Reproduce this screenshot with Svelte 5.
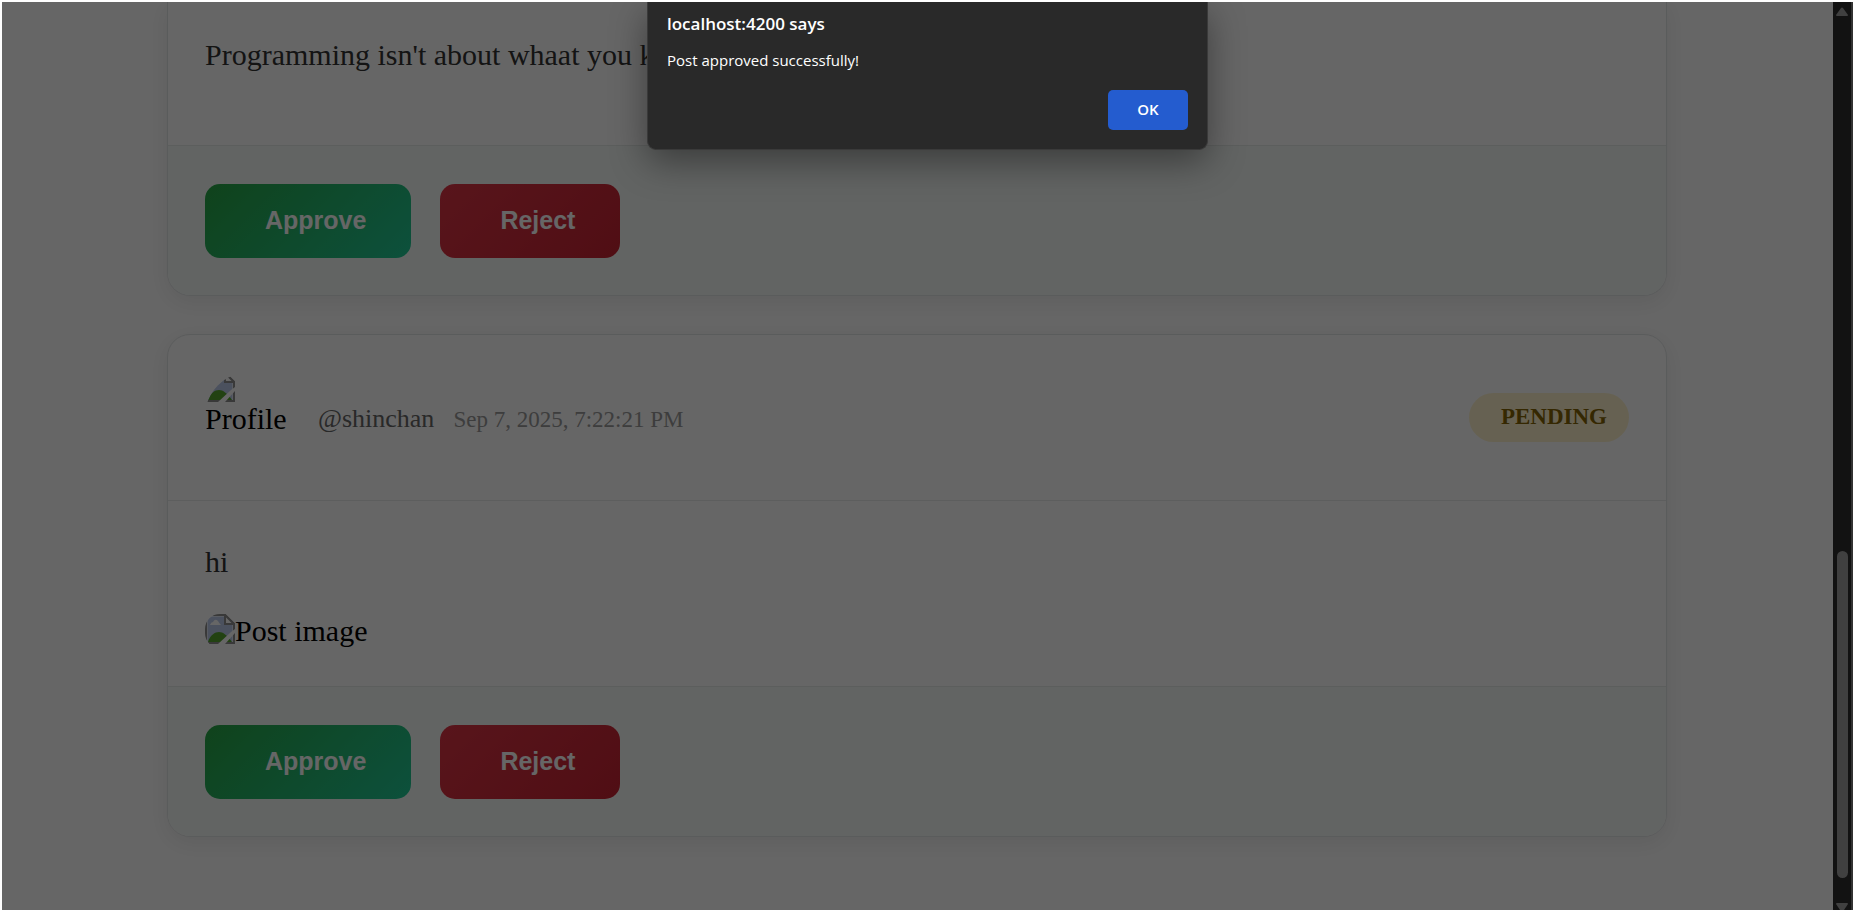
<script>
  const posts = [
    { id: 1, text: "Programming isn't about whaat you k", cut: true },
    {
      id: 2,
      text: 'hi',
      user: '@shinchan',
      date: 'Sep 7, 2025, 7:22:21 PM',
      status: 'PENDING',
      image: 'Post image'
    }
  ];
  let open = $state(true);
</script>

{#snippet brokenImage()}
  <svg class="broken" viewBox="0 0 30 30" aria-hidden="true">
    <path d="M1 1H20L29 10V29H1Z" fill="#dfe6f6" stroke="#8e8e8e" stroke-width="2" />
    <path d="M3 3H20V10H27V28H3Z" fill="#bccaec" />
    <path d="M5 11Q6 8 8 8Q10 4 13 7Q14 9 16 11Z" fill="#fff" />
    <path d="M3 28C5 21 10 18 14 18S22 21 27 28Z" fill="#55a52e" />
    <path d="M1 29H29" stroke="#8e8e8e" stroke-width="2" />
    <path d="M20 1V10H29Z" fill="#fff" stroke="#8e8e8e" stroke-width="2" />
    <path d="M13 30L26 18L30 15V19L20 30Z" fill="#fff" />
  </svg>
{/snippet}

<div class="window">
  <main class="page">
    <div class="feed">
      {#each posts as post (post.id)}
        <article class="card" class:cut={post.cut}>
          {#if post.user}
            <header>
              <div class="avatar">{@render brokenImage()}<span>Profile</span></div>
              <div class="meta">
                <span class="user">{post.user}</span>
                <time>{post.date}</time>
              </div>
              <span class="badge">{post.status}</span>
            </header>
          {/if}
          <div class="body">
            <p>{post.text}</p>
            {#if post.image}
              <div class="picture">{@render brokenImage()}<span>{post.image}</span></div>
            {/if}
          </div>
          <footer>
            <button type="button" class="approve">Approve</button>
            <button type="button" class="reject">Reject</button>
          </footer>
        </article>
      {/each}
    </div>
    {#if open}
      <div class="shade"></div>
      <div class="dialog" role="alertdialog" aria-labelledby="dialog-title" aria-describedby="dialog-text">
        <h1 id="dialog-title">localhost:4200 says</h1>
        <p id="dialog-text">Post approved successfully!</p>
        <button type="button" onclick={() => (open = false)}>OK</button>
      </div>
    {/if}
  </main>
  <div class="scrollbar" aria-hidden="true">
    <svg class="up" viewBox="0 0 14 10"><path d="M6 1Q7 0 8 1L13 8Q13 9 12 9H2Q1 9 1 8Z" fill="#404040" /></svg>
    <div class="track"><div class="thumb"></div></div>
    <svg class="down" viewBox="0 0 14 7"><path d="M2 0H12Q13 0 13 1L9 7H5L1 1Q1 0 2 0Z" fill="#404040" /></svg>
  </div>
</div>

<style>
  :global(body) {
    margin: 0;
    background: #fff;
  }
  .window {
    box-sizing: border-box;
    display: flex;
    height: 100vh;
    border: 2px solid #fff;
    overflow: hidden;
    font-family: 'Liberation Serif', 'Times New Roman', serif;
    font-size: 30px;
    color: #000;
  }
  .page {
    position: relative;
    flex: 1;
    min-width: 0;
    overflow: hidden;
  }
  .feed {
    display: flex;
    flex-direction: column;
    gap: 38px;
    max-width: 1500px;
    margin: 0 auto;
    padding-right: 1px;
  }
  .card {
    border: 1px solid #e2e5e6;
    border-radius: 23px;
    background: #fff;
    box-shadow: 0 6px 22px rgba(0, 0, 0, 0.08);
    overflow: hidden;
  }
  .card.cut {
    border-top: 0;
    border-radius: 0 0 23px 23px;
  }
  .card.cut .body {
    padding-top: 29px;
  }
  header {
    display: flex;
    align-items: center;
    gap: 23px;
    padding: 37px 37px 38px;
    border-bottom: 1px solid #e9ecec;
  }
  .avatar {
    display: flex;
    flex-direction: column;
    width: 90px;
    height: 90px;
    border-radius: 50%;
    overflow: hidden;
    line-height: 34px;
  }
  .broken {
    display: block;
    flex: none;
    width: 30px;
    height: 30px;
  }
  .meta {
    display: flex;
    flex: 1;
    align-items: baseline;
    gap: 19px;
    padding-top: 4px;
    line-height: 30px;
  }
  .user {
    font-size: 26px;
    color: #666;
  }
  time {
    font-size: 23px;
    color: #999;
  }
  .badge {
    padding: 11px 22px 12px 32px;
    border-radius: 30px;
    background: #fff3cd;
    color: #856404;
    font-size: 23px;
    font-weight: 700;
    line-height: 26px;
  }
  .body {
    padding: 37px 37px 38px;
  }
  .body p {
    margin: 0 0 28px;
    line-height: 48px;
    color: #333;
  }
  .picture {
    display: flex;
    height: 34px;
    border-radius: 15px;
    overflow: hidden;
    line-height: 34px;
  }
  footer {
    display: flex;
    gap: 29px;
    padding: 38px 37px 37px;
    border-top: 1px solid #e6ebe9;
    background: #f6fbf8;
  }
  footer button {
    padding: 0 45px 2px 60px;
    border: 0;
    border-radius: 15px;
    color: #fff;
    font: 700 25px/72px 'Liberation Sans', Arial, sans-serif;
  }
  .approve {
    background: linear-gradient(135deg, #28a745, #20c997);
  }
  .reject {
    background: linear-gradient(135deg, #dc3545, #c82333);
  }
  .shade {
    position: absolute;
    inset: 0;
    background: rgba(0, 0, 0, 0.6);
  }
  .dialog {
    position: absolute;
    top: 0;
    left: 0;
    right: -20px;
    box-sizing: border-box;
    display: flex;
    flex-direction: column;
    width: 561px;
    margin: 0 auto;
    padding: 9px 19px 19px;
    border: 1px solid #3a3a3a;
    border-top: 0;
    border-radius: 0 0 9px 9px;
    background: #292929;
    box-shadow: 0 12px 36px rgba(0, 0, 0, 0.4);
    color: #fff;
    font-family: 'Open Sans', 'Segoe UI', sans-serif;
  }
  .dialog h1 {
    margin: 0;
    font-size: 17px;
    font-weight: 600;
    line-height: 26px;
  }
  .dialog p {
    margin: 10px 0 17px;
    font-size: 15px;
    line-height: 26px;
  }
  .dialog button {
    align-self: flex-end;
    width: 80px;
    height: 40px;
    padding: 0 0 2px;
    border: 0;
    border-radius: 5px;
    background: #245ccf;
    color: #fff;
    font: 600 15px 'Open Sans', 'Segoe UI', sans-serif;
  }
  .scrollbar {
    box-sizing: border-box;
    display: flex;
    flex-direction: column;
    align-items: center;
    width: 20px;
    padding-top: 5px;
    border-right: 2px solid #333;
    background: #121212;
  }
  .up,
  .down {
    display: block;
    flex: none;
    width: 14px;
  }
  .track {
    flex: 1;
    display: flex;
    flex-direction: column;
    justify-content: flex-end;
    padding-bottom: 25px;
  }
  .thumb {
    width: 11px;
    height: 38%;
    border-radius: 6px;
    background: #404040;
  }
</style>
